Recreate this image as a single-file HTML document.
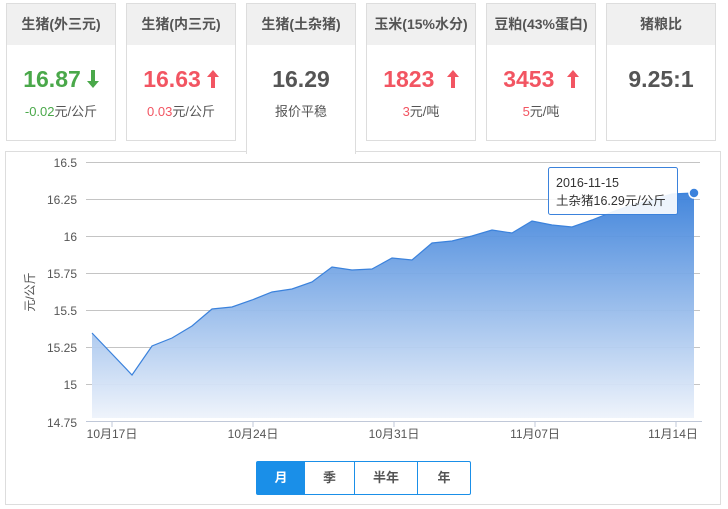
<!DOCTYPE html>
<html><head><meta charset="utf-8"><style>
body{margin:0;width:728px;height:509px;background:#fff;font-family:"Liberation Sans","Noto Sans CJK SC",sans-serif;position:relative;overflow:hidden}
.c{position:absolute;top:3px;width:108px;height:136px;border:1px solid #ddd;background:#fff;text-align:center}
.h{height:41px;background:#f0f0f0;line-height:41px;font-size:14px;font-weight:bold;color:#555}
.v{font-size:23px;font-weight:bold;margin-top:20px;height:28px;line-height:28px}
.s{font-size:13px;color:#555;margin-top:8px}
.g{color:#4aa84a}.r{color:#f25562}.k{color:#555}
.ar{display:inline-block;margin-left:6px;vertical-align:-1px}
</style></head><body>
<div class="c" style="left:6px"><div class="h">生猪(外三元)</div><div class="v g">16.87<svg class="ar" width="12" height="18" viewBox="0 0 12 18"><path d="M4 0h4v11h4l-6 7-6-7h4z" fill="#4aa84a"/></svg></div><div class="s"><span class="g">-0.02</span>元/公斤</div></div>
<div class="c" style="left:126px"><div class="h">生猪(内三元)</div><div class="v r">16.63<svg class="ar" width="12" height="18" viewBox="0 0 12 18"><path d="M4 18h4V7h4L6 0 0 7h4z" fill="#f25562"/></svg></div><div class="s"><span class="r">0.03</span>元/公斤</div></div>
<div class="c" style="left:246px;height:150px;border-bottom:none;z-index:2"><div class="h">生猪(土杂猪)</div><div class="v k">16.29</div><div class="s">报价平稳</div></div>
<div class="c" style="left:366px"><div class="h">玉米(15%水分)</div><div class="v r">1823 <svg class="ar" width="12" height="18" viewBox="0 0 12 18"><path d="M4 18h4V7h4L6 0 0 7h4z" fill="#f25562"/></svg></div><div class="s"><span class="r">3</span>元/吨</div></div>
<div class="c" style="left:486px"><div class="h">豆粕(43%蛋白)</div><div class="v r">3453 <svg class="ar" width="12" height="18" viewBox="0 0 12 18"><path d="M4 18h4V7h4L6 0 0 7h4z" fill="#f25562"/></svg></div><div class="s"><span class="r">5</span>元/吨</div></div>
<div class="c" style="left:606px"><div class="h">猪粮比</div><div class="v k">9.25:1</div></div>
<div style="position:absolute;left:5px;top:151px;width:714px;height:352px;border:1px solid #ddd"></div>
<svg style="position:absolute;left:0;top:0" width="728" height="509">
<defs><linearGradient id="gr" x1="0" y1="0" x2="0" y2="1"><stop offset="0" stop-color="#3a80da"/><stop offset="1" stop-color="#eef3fb"/></linearGradient></defs>
<g stroke="#c4c4c4" stroke-width="1">
<line x1="86" x2="700" y1="162.5" y2="162.5"/><line x1="86" x2="700" y1="199.5" y2="199.5"/><line x1="86" x2="700" y1="236.5" y2="236.5"/><line x1="86" x2="700" y1="273.5" y2="273.5"/><line x1="86" x2="700" y1="310.5" y2="310.5"/><line x1="86" x2="700" y1="347.5" y2="347.5"/><line x1="86" x2="700" y1="384.5" y2="384.5"/></g>
<polygon fill="url(#gr)" opacity="0.95" points="92,418 92,333 132,375 152,346 172,338 192,326 212,309 232,307 252,300 272,292 292,289 312,282 332,267 352,270 372,269 392,258 412,260 432,243 452,241 472,236 492,230 512,233 532,221 552,225 572,227 592,220 612,212 632,205 652,200 672,194 694,193 694,418"/>
<polyline fill="none" stroke="#3b82dc" stroke-width="1.2" points="92,333 132,375 152,346 172,338 192,326 212,309 232,307 252,300 272,292 292,289 312,282 332,267 352,270 372,269 392,258 412,260 432,243 452,241 472,236 492,230 512,233 532,221 552,225 572,227 592,220 612,212 632,205 652,200 672,194 694,193"/>
<line x1="86" x2="702" y1="421.5" y2="421.5" stroke="#c0c8d8"/>
<g stroke="#c0c8d8"><line x1="112" x2="112" y1="421" y2="427"/><line x1="253" x2="253" y1="421" y2="427"/><line x1="394" x2="394" y1="421" y2="427"/><line x1="535" x2="535" y1="421" y2="427"/><line x1="676" x2="676" y1="421" y2="427"/></g>
<circle cx="694" cy="193" r="5" fill="#3b82dc" stroke="#fff" stroke-width="1.5"/>
<g font-size="12" fill="#555" text-anchor="end" font-family="Liberation Sans,sans-serif">
<text x="77" y="167">16.5</text><text x="77" y="204">16.25</text><text x="77" y="241">16</text><text x="77" y="278">15.75</text><text x="77" y="315">15.5</text><text x="77" y="352">15.25</text><text x="77" y="389">15</text><text x="77" y="427">14.75</text></g>
<g font-size="12" fill="#555" text-anchor="middle" font-family="Liberation Sans,Noto Sans CJK SC,sans-serif">
<text x="112" y="438">10月17日</text><text x="253" y="438">10月24日</text><text x="394" y="438">10月31日</text><text x="535" y="438">11月07日</text><text x="673" y="438">11月14日</text></g>
<text transform="translate(34,292) rotate(-90)" font-size="12" fill="#555" text-anchor="middle" font-family="Liberation Sans,Noto Sans CJK SC,sans-serif">元/公斤</text>
<rect x="548.5" y="167.5" width="129" height="47" rx="2" fill="#fff" fill-opacity="0.9" stroke="#3b82dc"/>
<g font-size="12.5" fill="#333" font-family="Liberation Sans,Noto Sans CJK SC,sans-serif"><text x="556" y="187">2016-11-15</text><text x="556" y="205">土杂猪16.29元/公斤</text></g>
</svg>
<div style="position:absolute;left:256px;top:461px;width:213px;height:32px;border:1px solid #1a8fe8;border-radius:2px;display:flex;font-size:13px;font-weight:bold;color:#555;line-height:32px;text-align:center">
<div style="width:48px;background:#1a8fe8;color:#fff">月</div>
<div style="width:49px;border-right:1px solid #1a8fe8">季</div>
<div style="width:62px;border-right:1px solid #1a8fe8">半年</div>
<div style="flex:1">年</div></div>
</body></html>
